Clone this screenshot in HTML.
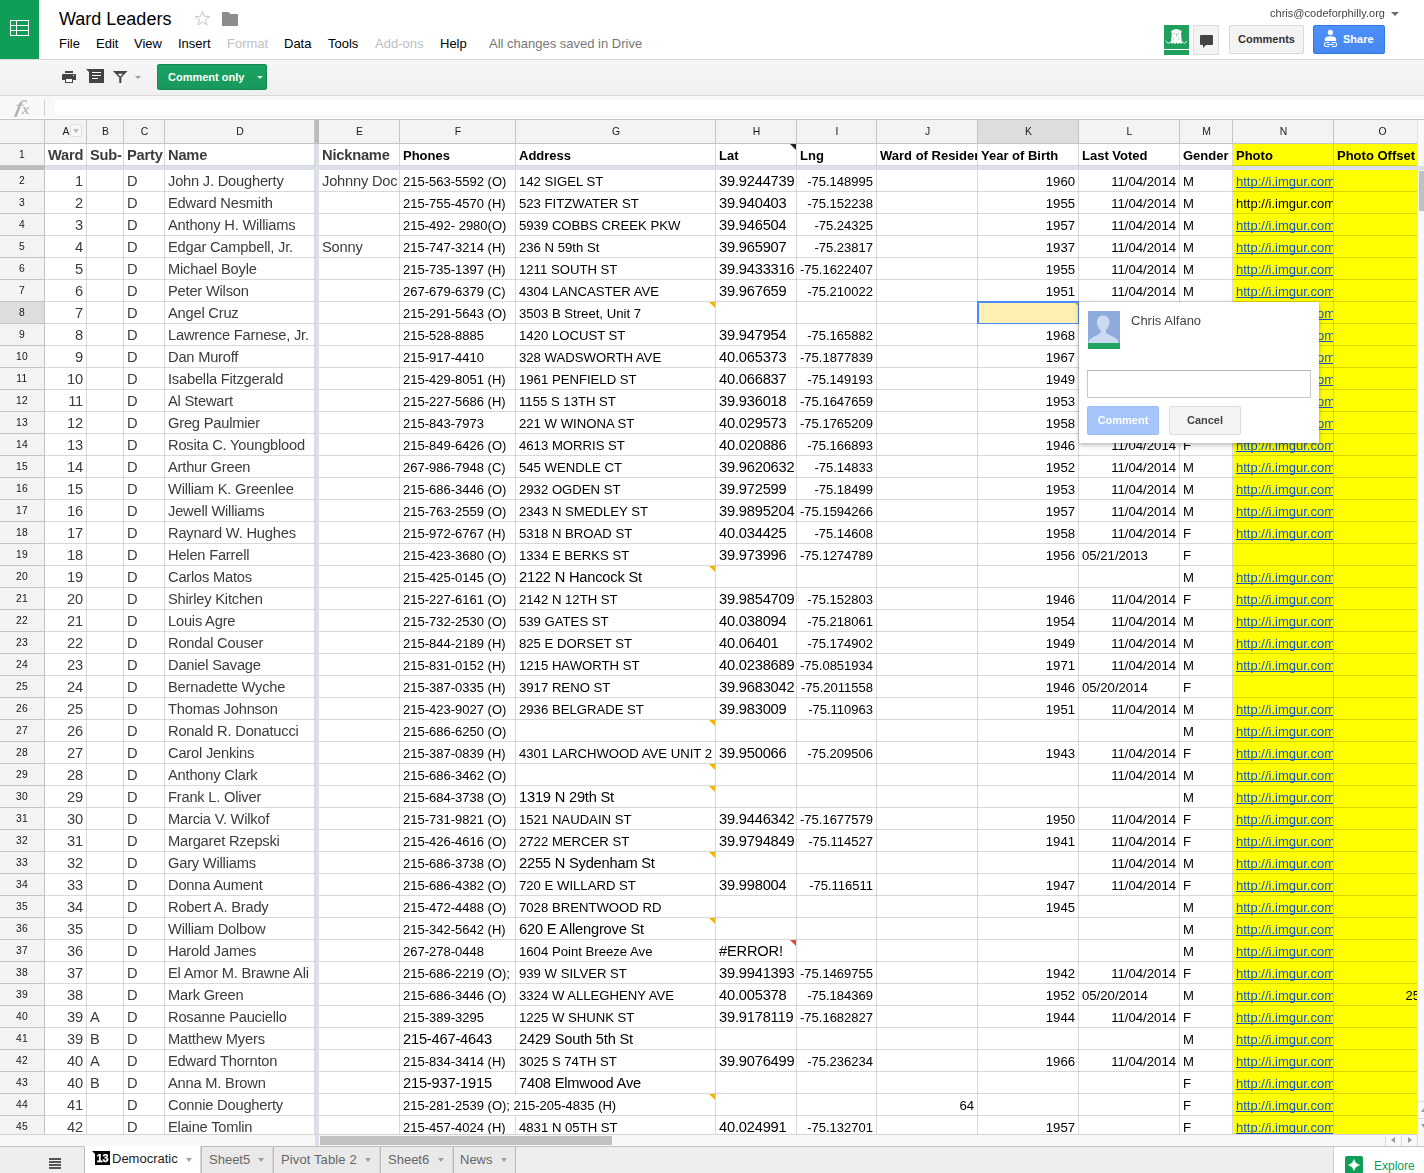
<!DOCTYPE html>
<html><head><meta charset="utf-8"><title>Ward Leaders - Google Sheets</title>
<style>
*{box-sizing:border-box;margin:0;padding:0}
html,body{width:1424px;height:1173px;overflow:hidden;background:#fff}
body{font-family:"Liberation Sans",Arial,sans-serif;font-size:13px;color:#000;position:relative}
div,span,a,svg{position:absolute}
span.i,.c span{position:static}
/* title bar */
#logo{left:0;top:0;width:39px;height:59px;background:#0f9d58}
#tb-line{left:0;top:59px;width:1424px;height:1px;background:#d9d9d9}

#title{left:59px;top:9px;font-size:18px;line-height:21px;white-space:nowrap;color:#000}
.m{top:36px;font-size:13px;line-height:16px;white-space:nowrap;color:#000}
.m.d{color:#c0c0c0}
.m.s{color:#777}
#email{left:1270px;top:6px;font-size:11px;line-height:14px;color:#444;white-space:nowrap;letter-spacing:0.03px}
.btn{top:25px;height:29px;border:1px solid #d9d9d9;border-radius:2px;background:#f3f3f3;font-size:11px;font-weight:bold;line-height:27px;text-align:center;color:#333;white-space:nowrap}
/* toolbar */
#toolbar{left:0;top:60px;width:1424px;height:35px;background:linear-gradient(#f6f6f6,#f0f0f0)}
#toolbar-b{left:0;top:95px;width:1424px;height:1px;background:#d9d9d9}
#cbtn{left:157px;top:64px;width:110px;height:26px;border-radius:2px;background:linear-gradient(#1ba261,#17995a);border:1px solid #14894f;color:#fff;font-weight:bold;font-size:11px;line-height:24px;white-space:nowrap}
/* formula bar */
#fbar{left:0;top:96px;width:1424px;height:23px;background:#f8f8f8;border-bottom:1px solid #fdfdfd}
#finput{left:55px;top:100px;width:1369px;height:15px;background:#fff}
#fsep{left:44px;top:99px;width:1px;height:17px;background:#d0d0d0}
#fx{left:0;top:96px;width:44px;height:23px;font-family:"Liberation Serif",serif;font-style:italic;color:#b2b2b2}
#fx span{position:absolute;line-height:20px}
.fxf{left:15px;top:1px;font-size:18px;transform:skewX(-6deg) scaleX(1.6);transform-origin:0 50%;-webkit-text-stroke:.2px #b2b2b2}
.fxx{left:22.300px;top:3px;font-size:15px;transform:scaleX(1.1);transform-origin:0 0;-webkit-text-stroke:.2px #b2b2b2}
.ga{will-change:transform}
/* grid */
#grid{left:0;top:0;width:1417px;height:1134px;overflow:hidden}
.yel{background:#ffff00}
.hl{left:45px;width:1372px;height:1px;background:rgba(0,0,0,.15)}
.vl{width:1px;background:rgba(0,0,0,.15)}
.c{height:21px;overflow:hidden;white-space:nowrap;padding:0 0 0 3px;line-height:21px}
.c.ov{overflow:visible}
.s10{font-size:13.15px;color:#000;padding-top:1px}
.s10.n{font-size:13px}
.s11{font-size:14.667px;letter-spacing:-.2px;color:#000;padding-top:1px}
.g11{font-size:14.667px;letter-spacing:-.2px;color:#3c3c3c;padding-top:1px}
.b{font-weight:bold}
.b.s10{font-size:13px}
.r{text-align:right;padding-right:3px}
.r.po{padding-right:10px}
.lk{color:#1155cc;text-decoration:underline;text-decoration-skip-ink:none;text-underline-offset:1px}
.nt{width:0;height:0;border-left:6px solid transparent;border-top:6px solid #f4b400}
.nt.blk{border-top-color:#222}
.nt.red{border-top-color:#dd4b39}
.fz{background:#dadfe8}
.fzh{background:#bcbcbc}
#sel{left:977px;top:301px;width:102px;height:23px;background:#fef0b3;overflow:hidden}
#sel i{position:absolute;left:0;top:0;right:0;bottom:0;border:2px solid #4a8af4;border-right-width:1.5px;border-bottom-width:1.5px}
/* headers */
#colhdr{left:0;top:119px;width:1417px;overflow:hidden;height:25px;background:#f3f3f3;border-top:1px solid #c4c4c4;border-bottom:1px solid #c4c4c4}
.ch{top:0;height:23px;border-right:1px solid #c4c4c4;text-align:center;font-size:10.4px;line-height:24px;color:#1a1a1a;text-indent:1px;box-sizing:content-box}
.ch.on{background:#dddddd}
#rowhdr{left:0;top:144px;width:45px;height:990px;background:#f3f3f3;border-right:1px solid #c4c4c4;overflow:hidden}
.rh{left:0;width:44px;height:22px;border-bottom:1px solid #c4c4c4;text-align:center;font-size:10.3px;line-height:22px;color:#161616;letter-spacing:.3px}
.rh.on{background:#dddddd}
#corner{left:0;top:119px;width:45px;height:25px;background:#f3f3f3;border:1px solid #c4c4c4;border-left:0}
.asort{left:70px;top:4px;width:12px;height:13px;border:1px solid #e0e0e0;border-radius:2px;background:#f8f8f8}
.asort:after{content:"";position:absolute;left:2px;top:4px;border-left:3.5px solid transparent;border-right:3.5px solid transparent;border-top:4px solid #bbb}
/* bottom */
#gridb{left:0;top:1134px;width:1417px;height:1px;background:#d4d4d4}
#hsb{left:0;top:1135px;width:1424px;height:11px;background:#f8f8f8}
.sbl{background:#dcdcdc}
.tri{width:0;height:0}
#hthumb{left:320px;top:1136px;width:292px;height:9px;background:#c1c1c1}
#vsb{left:1417px;top:119px;width:7px;height:1016px;background:#f8f8f8;border-top:1px solid #c4c4c4;border-left:1px solid #e2e2ea}
#vthumb{left:1419px;top:171px;width:5px;height:40px;background:#c1c1c1}
#bbar{left:0;top:1146px;width:1424px;height:27px;background:#eeeeee;border-top:1px solid #c4c4c4}
.tab{top:1146px;height:27px;border:1px solid #bdbdbd;border-bottom:0;background:#e9e9e9;box-shadow:-1px 0 0 #d6d6d6;font-size:13px;line-height:16px;color:#666;white-space:nowrap}
.tab.act{background:#fff;color:#222;border-top-color:#fff;box-shadow:none}
.car{width:0;height:0;border-left:3.5px solid transparent;border-right:3.5px solid transparent;border-top:4px solid #a0a0a0}
/* popup */
#pop{left:1079px;top:302px;width:240px;height:141px;background:#fff;box-shadow:0 2px 5px rgba(0,0,0,.28),0 0 1px rgba(0,0,0,.15)}
</style></head><body>
<div id="logo"><svg width="19" height="16" style="left:10px;top:20px" shape-rendering="crispEdges"><rect x="0.5" y="0.5" width="18" height="15" fill="none" stroke="#fff"/><rect x="6" y="0" width="1" height="16" fill="#fff"/><rect x="0" y="5" width="19" height="1" fill="#fff"/><rect x="0" y="10" width="19" height="1" fill="#fff"/></svg></div>
<div id="tb-line"></div>
<div id="title">Ward Leaders</div>
<svg id="star" width="17" height="17" viewBox="0 0 17 17" style="left:194px;top:10px"><path d="M8.5 1.3 L10.4 6.3 L15.7 6.5 L11.5 9.8 L13 15 L8.5 12 L4 15 L5.5 9.8 L1.3 6.5 L6.6 6.3 Z" fill="none" stroke="#c8c8c8" stroke-width="1"/></svg>
<svg id="folder" width="16" height="14" style="left:222px;top:12px"><path d="M0 0.5 Q0 0 .5 0 H6.5 L8.5 2 H15.5 Q16 2 16 2.5 V13.5 Q16 14 15.5 14 H.5 Q0 14 0 13.5 Z" fill="#8c8c8c"/></svg>
<div class="m" style="left:59px">File</div>
<div class="m" style="left:96px">Edit</div>
<div class="m" style="left:134px">View</div>
<div class="m" style="left:178px">Insert</div>
<div class="m d" style="left:227px">Format</div>
<div class="m" style="left:284px">Data</div>
<div class="m" style="left:328px">Tools</div>
<div class="m d" style="left:375px">Add-ons</div>
<div class="m" style="left:440px">Help</div>
<div class="m s" style="left:489px">All changes saved in Drive</div>
<div id="email" class="ga">chris@codeforphilly.org</div>
<div class="car" style="left:1391px;top:12px;border-left-width:4px;border-right-width:4px;border-top-color:#6e6e6e"></div>
<div id="anon" style="left:1164px;top:25px;width:25px;height:24px;background:#1fa15d"><svg width="25" height="24" viewBox="0 0 25 24"><path d="M7.200 6.800 Q7 5.600 8.300 5.600 Q10 3.900 12.400 3.900 Q14.800 3.900 16.500 5.600 Q17.800 5.600 17.600 6.800 Q17.600 7.600 17 8 L17.700 16.600 L18.200 17.200 Q16.900 20 15.600 17.600 Q14 20.200 12.400 17.600 Q10.800 20.200 9.200 17.600 Q7.900 20 6.600 17.200 L7.100 16.600 L7.800 8 Q7.200 7.600 7.200 6.800 Z" fill="#fff"/><path d="M2.100 16.400 L4.300 18.400 L6.800 16.900 M18 16.900 L20.500 18.400 L22.700 16.400" stroke="#fff" stroke-width=".9" fill="none" stroke-linecap="round"/><circle cx="10.300" cy="8.500" r=".55" fill="#1fa15d" opacity=".8"/><circle cx="14.400" cy="8.500" r=".55" fill="#1fa15d" opacity=".8"/><path d="M11.700 9.100 h1.300 l-.65 1.300 z" fill="#1fa15d"/><path d="M11.800 10.600 h1.100 v1.100 h-1.100z" fill="#1fa15d" opacity=".45"/><path d="M9.400 12.400 Q10.600 13.500 9.400 14.900 M15.300 12.400 Q14.100 13.500 15.300 14.900" stroke="#1fa15d" stroke-width=".6" fill="none" opacity=".6"/></svg></div>
<div style="left:1164px;top:50px;width:25px;height:5px;background:#1fa15d"></div>
<div class="btn" style="left:1193px;width:26px;height:30px;background:#f3f3f3;border-color:#dcdcdc;border-radius:0"><svg width="14" height="13" style="left:6px;top:9px"><path d="M1 0 H12 Q13 0 13 1 V9 Q13 10 12 10 H6 L3 13 V10 H1 Q0 10 0 9 V1 Q0 0 1 0 Z" fill="#444"/></svg></div>
<div class="btn" style="left:1229px;width:75px">Comments</div>
<div class="btn" style="left:1313px;width:72px;background:linear-gradient(#4d90fe,#4787ed);border-color:#3079ed;color:#fff;text-align:left;padding-left:29px">Share<svg width="15" height="20" viewBox="0 0 15 20" style="left:9px;top:3.4px"><circle cx="7.400" cy="3.400" r="2.600" fill="#fff"/><path d="M1.800 12 V10.300 Q1.800 7.200 7.400 7.200 Q13.100 7.200 13.100 10.300 V12 Z" fill="#fff"/><path d="M6.300 13.500 H3.400 Q1.400 13.500 1.400 15.500 Q1.400 17.500 3.400 17.500 H6.300 M8.700 13.500 H11.600 Q13.600 13.500 13.600 15.500 Q13.600 17.500 11.600 17.500 H8.700 M4 15.500 H11" fill="none" stroke="#fff" stroke-width="1.050"/></svg></div>
<div id="toolbar"></div><div id="toolbar-b"></div>
<svg id="ic-print" width="14" height="12" style="left:62px;top:71px" shape-rendering="crispEdges"><rect x="3" y="0" width="8" height="2" fill="#444"/><path d="M1 3 H13 Q14 3 14 4 V9 H11 V7 H3 V9 H0 V4 Q0 3 1 3 Z" fill="#444" shape-rendering="auto"/><rect x="3.500" y="7.500" width="7" height="4" fill="#fff" stroke="#444"/><rect x="11" y="4" width="1" height="1" fill="#fff"/></svg>
<svg id="ic-note" width="18" height="14" style="left:86px;top:69px" shape-rendering="crispEdges"><path d="M0 0 H18 V14 H3 V3 Z" fill="#444" shape-rendering="auto"/><rect x="6" y="3" width="9" height="1" fill="#fff"/><rect x="6" y="6" width="9" height="1" fill="#fff"/><rect x="6" y="9" width="6" height="1" fill="#fff"/></svg>
<svg id="ic-filter" width="15" height="12" style="left:113px;top:71px"><path d="M0 0 H14.500 L8.300 6.500 V12 H6.300 V6.500 Z" fill="#444"/><path d="M4.800 2.800 H9.900 L7.300 5.400 Z" fill="#f3f3f3"/></svg>
<div class="car" style="left:135px;top:76px;border-left-width:3px;border-right-width:3px;border-top-width:3px;border-top-color:#999"></div>
<div id="cbtn"><span class="i" style="position:absolute;left:10px;top:0">Comment only</span><div class="car" style="left:99px;top:11px;border-left-width:3px;border-right-width:3px;border-top-width:3px;border-top-color:rgba(255,255,255,.8)"></div></div>
<div id="fbar"></div><div id="finput"></div><div id="fsep"></div><div id="fx" class="ga"><span class="fxf">f</span><span class="fxx">x</span></div>
<div id="grid" class="ga">
<div class="yel" style="left:1233px;top:144px;width:184px;height:990px"></div>
<div class="hl" style="top:165px"></div>
<div class="hl" style="top:191px"></div>
<div class="hl" style="top:213px"></div>
<div class="hl" style="top:235px"></div>
<div class="hl" style="top:257px"></div>
<div class="hl" style="top:279px"></div>
<div class="hl" style="top:301px"></div>
<div class="hl" style="top:323px"></div>
<div class="hl" style="top:345px"></div>
<div class="hl" style="top:367px"></div>
<div class="hl" style="top:389px"></div>
<div class="hl" style="top:411px"></div>
<div class="hl" style="top:433px"></div>
<div class="hl" style="top:455px"></div>
<div class="hl" style="top:477px"></div>
<div class="hl" style="top:499px"></div>
<div class="hl" style="top:521px"></div>
<div class="hl" style="top:543px"></div>
<div class="hl" style="top:565px"></div>
<div class="hl" style="top:587px"></div>
<div class="hl" style="top:609px"></div>
<div class="hl" style="top:631px"></div>
<div class="hl" style="top:653px"></div>
<div class="hl" style="top:675px"></div>
<div class="hl" style="top:697px"></div>
<div class="hl" style="top:719px"></div>
<div class="hl" style="top:741px"></div>
<div class="hl" style="top:763px"></div>
<div class="hl" style="top:785px"></div>
<div class="hl" style="top:807px"></div>
<div class="hl" style="top:829px"></div>
<div class="hl" style="top:851px"></div>
<div class="hl" style="top:873px"></div>
<div class="hl" style="top:895px"></div>
<div class="hl" style="top:917px"></div>
<div class="hl" style="top:939px"></div>
<div class="hl" style="top:961px"></div>
<div class="hl" style="top:983px"></div>
<div class="hl" style="top:1005px"></div>
<div class="hl" style="top:1027px"></div>
<div class="hl" style="top:1049px"></div>
<div class="hl" style="top:1071px"></div>
<div class="hl" style="top:1093px"></div>
<div class="hl" style="top:1115px"></div>
<div class="vl" style="left:86px;top:144px;height:990px"></div>
<div class="vl" style="left:123px;top:144px;height:990px"></div>
<div class="vl" style="left:164px;top:144px;height:990px"></div>
<div class="vl" style="left:314px;top:144px;height:990px"></div>
<div class="vl" style="left:399px;top:144px;height:990px"></div>
<div class="vl" style="left:515px;top:144px;height:950px"></div>
<div class="vl" style="left:515px;top:1116px;height:18px"></div>
<div class="vl" style="left:715px;top:144px;height:990px"></div>
<div class="vl" style="left:796px;top:144px;height:990px"></div>
<div class="vl" style="left:876px;top:144px;height:990px"></div>
<div class="vl" style="left:977px;top:144px;height:990px"></div>
<div class="vl" style="left:1078px;top:144px;height:990px"></div>
<div class="vl" style="left:1179px;top:144px;height:990px"></div>
<div class="vl" style="left:1232px;top:144px;height:990px"></div>
<div class="vl" style="left:1333px;top:144px;height:990px"></div>
<div class="c b g11" style="left:45px;top:144px;width:41px">Ward</div>
<div class="c b g11" style="left:87px;top:144px;width:36px">Sub-</div>
<div class="c b g11" style="left:124px;top:144px;width:40px">Party</div>
<div class="c b g11" style="left:165px;top:144px;width:150px">Name</div>
<div class="c b g11" style="left:319px;top:144px;width:80px">Nickname</div>
<div class="c b s10" style="left:400px;top:144px;width:115px">Phones</div>
<div class="c b s10" style="left:516px;top:144px;width:199px">Address</div>
<div class="c b s10" style="left:716px;top:144px;width:80px">Lat</div>
<div class="c b s10" style="left:797px;top:144px;width:79px">Lng</div>
<div class="c b s10" style="left:877px;top:144px;width:100px">Ward of Residence</div>
<div class="c b s10" style="left:978px;top:144px;width:100px">Year of Birth</div>
<div class="c b s10" style="left:1079px;top:144px;width:100px">Last Voted</div>
<div class="c b s10" style="left:1180px;top:144px;width:52px">Gender</div>
<div class="c b s10" style="left:1233px;top:144px;width:100px">Photo</div>
<div class="c b s10" style="left:1334px;top:144px;width:96px">Photo Offset</div>
<div class="c g11 r" style="left:45px;top:170px;width:41px">1</div>
<div class="c g11" style="left:124px;top:170px;width:40px">D</div>
<div class="c g11" style="left:165px;top:170px;width:150px">John J. Dougherty</div>
<div class="c g11" style="left:319px;top:170px;width:80px">Johnny Doc</div>
<div class="c s10 n" style="left:400px;top:170px;width:115px">215-563-5592 (O)</div>
<div class="c s10" style="left:516px;top:170px;width:199px">142 SIGEL ST</div>
<div class="c s11" style="left:716px;top:170px;width:80px">39.9244739</div>
<div class="c s10 n r" style="left:797px;top:170px;width:79px">-75.148995</div>
<div class="c s10 r" style="left:978px;top:170px;width:100px">1960</div>
<div class="c s10 r" style="left:1079px;top:170px;width:100px">11/04/2014</div>
<div class="c s10" style="left:1180px;top:170px;width:52px">M</div>
<div class="c s10 n" style="left:1233px;top:170px;width:100px"><span class="lk">http://i.imgur.com/</span></div>
<div class="c g11 r" style="left:45px;top:192px;width:41px">2</div>
<div class="c g11" style="left:124px;top:192px;width:40px">D</div>
<div class="c g11" style="left:165px;top:192px;width:150px">Edward Nesmith</div>
<div class="c s10 n" style="left:400px;top:192px;width:115px">215-755-4570 (H)</div>
<div class="c s10" style="left:516px;top:192px;width:199px">523 FITZWATER ST</div>
<div class="c s11" style="left:716px;top:192px;width:80px">39.940403</div>
<div class="c s10 n r" style="left:797px;top:192px;width:79px">-75.152238</div>
<div class="c s10 r" style="left:978px;top:192px;width:100px">1955</div>
<div class="c s10 r" style="left:1079px;top:192px;width:100px">11/04/2014</div>
<div class="c s10" style="left:1180px;top:192px;width:52px">M</div>
<div class="c s10 n" style="left:1233px;top:192px;width:100px">http://i.imgur.com/</div>
<div class="c g11 r" style="left:45px;top:214px;width:41px">3</div>
<div class="c g11" style="left:124px;top:214px;width:40px">D</div>
<div class="c g11" style="left:165px;top:214px;width:150px">Anthony H. Williams</div>
<div class="c s10 n" style="left:400px;top:214px;width:115px">215-492- 2980(O)</div>
<div class="c s10" style="left:516px;top:214px;width:199px">5939 COBBS CREEK PKW</div>
<div class="c s11" style="left:716px;top:214px;width:80px">39.946504</div>
<div class="c s10 n r" style="left:797px;top:214px;width:79px">-75.24325</div>
<div class="c s10 r" style="left:978px;top:214px;width:100px">1957</div>
<div class="c s10 r" style="left:1079px;top:214px;width:100px">11/04/2014</div>
<div class="c s10" style="left:1180px;top:214px;width:52px">M</div>
<div class="c s10 n" style="left:1233px;top:214px;width:100px"><span class="lk">http://i.imgur.com/</span></div>
<div class="c g11 r" style="left:45px;top:236px;width:41px">4</div>
<div class="c g11" style="left:124px;top:236px;width:40px">D</div>
<div class="c g11" style="left:165px;top:236px;width:150px">Edgar Campbell, Jr.</div>
<div class="c g11" style="left:319px;top:236px;width:80px">Sonny</div>
<div class="c s10 n" style="left:400px;top:236px;width:115px">215-747-3214 (H)</div>
<div class="c s10" style="left:516px;top:236px;width:199px">236 N 59th St</div>
<div class="c s11" style="left:716px;top:236px;width:80px">39.965907</div>
<div class="c s10 n r" style="left:797px;top:236px;width:79px">-75.23817</div>
<div class="c s10 r" style="left:978px;top:236px;width:100px">1937</div>
<div class="c s10 r" style="left:1079px;top:236px;width:100px">11/04/2014</div>
<div class="c s10" style="left:1180px;top:236px;width:52px">M</div>
<div class="c s10 n" style="left:1233px;top:236px;width:100px"><span class="lk">http://i.imgur.com/</span></div>
<div class="c g11 r" style="left:45px;top:258px;width:41px">5</div>
<div class="c g11" style="left:124px;top:258px;width:40px">D</div>
<div class="c g11" style="left:165px;top:258px;width:150px">Michael Boyle</div>
<div class="c s10 n" style="left:400px;top:258px;width:115px">215-735-1397 (H)</div>
<div class="c s10" style="left:516px;top:258px;width:199px">1211 SOUTH ST</div>
<div class="c s11" style="left:716px;top:258px;width:80px">39.9433316</div>
<div class="c s10 n r" style="left:797px;top:258px;width:79px">-75.1622407</div>
<div class="c s10 r" style="left:978px;top:258px;width:100px">1955</div>
<div class="c s10 r" style="left:1079px;top:258px;width:100px">11/04/2014</div>
<div class="c s10" style="left:1180px;top:258px;width:52px">M</div>
<div class="c s10 n" style="left:1233px;top:258px;width:100px"><span class="lk">http://i.imgur.com/</span></div>
<div class="c g11 r" style="left:45px;top:280px;width:41px">6</div>
<div class="c g11" style="left:124px;top:280px;width:40px">D</div>
<div class="c g11" style="left:165px;top:280px;width:150px">Peter Wilson</div>
<div class="c s10 n" style="left:400px;top:280px;width:115px">267-679-6379 (C)</div>
<div class="c s10" style="left:516px;top:280px;width:199px">4304 LANCASTER AVE</div>
<div class="c s11" style="left:716px;top:280px;width:80px">39.967659</div>
<div class="c s10 n r" style="left:797px;top:280px;width:79px">-75.210022</div>
<div class="c s10 r" style="left:978px;top:280px;width:100px">1951</div>
<div class="c s10 r" style="left:1079px;top:280px;width:100px">11/04/2014</div>
<div class="c s10" style="left:1180px;top:280px;width:52px">M</div>
<div class="c s10 n" style="left:1233px;top:280px;width:100px"><span class="lk">http://i.imgur.com/</span></div>
<div class="c g11 r" style="left:45px;top:302px;width:41px">7</div>
<div class="c g11" style="left:124px;top:302px;width:40px">D</div>
<div class="c g11" style="left:165px;top:302px;width:150px">Angel Cruz</div>
<div class="c s10 n" style="left:400px;top:302px;width:115px">215-291-5643 (O)</div>
<div class="c s10" style="left:516px;top:302px;width:199px">3503 B Street, Unit 7</div>
<div class="c s10" style="left:1180px;top:302px;width:52px">M</div>
<div class="c s10 n" style="left:1233px;top:302px;width:100px"><span class="lk">http://i.imgur.com/</span></div>
<div class="c g11 r" style="left:45px;top:324px;width:41px">8</div>
<div class="c g11" style="left:124px;top:324px;width:40px">D</div>
<div class="c g11" style="left:165px;top:324px;width:150px">Lawrence Farnese, Jr.</div>
<div class="c s10 n" style="left:400px;top:324px;width:115px">215-528-8885</div>
<div class="c s10" style="left:516px;top:324px;width:199px">1420 LOCUST ST</div>
<div class="c s11" style="left:716px;top:324px;width:80px">39.947954</div>
<div class="c s10 n r" style="left:797px;top:324px;width:79px">-75.165882</div>
<div class="c s10 r" style="left:978px;top:324px;width:100px">1968</div>
<div class="c s10 r" style="left:1079px;top:324px;width:100px">11/04/2014</div>
<div class="c s10" style="left:1180px;top:324px;width:52px">M</div>
<div class="c s10 n" style="left:1233px;top:324px;width:100px"><span class="lk">http://i.imgur.com/</span></div>
<div class="c g11 r" style="left:45px;top:346px;width:41px">9</div>
<div class="c g11" style="left:124px;top:346px;width:40px">D</div>
<div class="c g11" style="left:165px;top:346px;width:150px">Dan Muroff</div>
<div class="c s10 n" style="left:400px;top:346px;width:115px">215-917-4410</div>
<div class="c s10" style="left:516px;top:346px;width:199px">328 WADSWORTH AVE</div>
<div class="c s11" style="left:716px;top:346px;width:80px">40.065373</div>
<div class="c s10 n r" style="left:797px;top:346px;width:79px">-75.1877839</div>
<div class="c s10 r" style="left:978px;top:346px;width:100px">1967</div>
<div class="c s10 r" style="left:1079px;top:346px;width:100px">11/04/2014</div>
<div class="c s10" style="left:1180px;top:346px;width:52px">M</div>
<div class="c s10 n" style="left:1233px;top:346px;width:100px"><span class="lk">http://i.imgur.com/</span></div>
<div class="c g11 r" style="left:45px;top:368px;width:41px">10</div>
<div class="c g11" style="left:124px;top:368px;width:40px">D</div>
<div class="c g11" style="left:165px;top:368px;width:150px">Isabella Fitzgerald</div>
<div class="c s10 n" style="left:400px;top:368px;width:115px">215-429-8051 (H)</div>
<div class="c s10" style="left:516px;top:368px;width:199px">1961 PENFIELD ST</div>
<div class="c s11" style="left:716px;top:368px;width:80px">40.066837</div>
<div class="c s10 n r" style="left:797px;top:368px;width:79px">-75.149193</div>
<div class="c s10 r" style="left:978px;top:368px;width:100px">1949</div>
<div class="c s10 r" style="left:1079px;top:368px;width:100px">11/04/2014</div>
<div class="c s10" style="left:1180px;top:368px;width:52px">F</div>
<div class="c s10 n" style="left:1233px;top:368px;width:100px"><span class="lk">http://i.imgur.com/</span></div>
<div class="c g11 r" style="left:45px;top:390px;width:41px">11</div>
<div class="c g11" style="left:124px;top:390px;width:40px">D</div>
<div class="c g11" style="left:165px;top:390px;width:150px">Al Stewart</div>
<div class="c s10 n" style="left:400px;top:390px;width:115px">215-227-5686 (H)</div>
<div class="c s10" style="left:516px;top:390px;width:199px">1155 S 13TH ST</div>
<div class="c s11" style="left:716px;top:390px;width:80px">39.936018</div>
<div class="c s10 n r" style="left:797px;top:390px;width:79px">-75.1647659</div>
<div class="c s10 r" style="left:978px;top:390px;width:100px">1953</div>
<div class="c s10 r" style="left:1079px;top:390px;width:100px">11/04/2014</div>
<div class="c s10" style="left:1180px;top:390px;width:52px">M</div>
<div class="c s10 n" style="left:1233px;top:390px;width:100px"><span class="lk">http://i.imgur.com/</span></div>
<div class="c g11 r" style="left:45px;top:412px;width:41px">12</div>
<div class="c g11" style="left:124px;top:412px;width:40px">D</div>
<div class="c g11" style="left:165px;top:412px;width:150px">Greg Paulmier</div>
<div class="c s10 n" style="left:400px;top:412px;width:115px">215-843-7973</div>
<div class="c s10" style="left:516px;top:412px;width:199px">221 W WINONA ST</div>
<div class="c s11" style="left:716px;top:412px;width:80px">40.029573</div>
<div class="c s10 n r" style="left:797px;top:412px;width:79px">-75.1765209</div>
<div class="c s10 r" style="left:978px;top:412px;width:100px">1958</div>
<div class="c s10 r" style="left:1079px;top:412px;width:100px">11/04/2014</div>
<div class="c s10" style="left:1180px;top:412px;width:52px">M</div>
<div class="c s10 n" style="left:1233px;top:412px;width:100px"><span class="lk">http://i.imgur.com/</span></div>
<div class="c g11 r" style="left:45px;top:434px;width:41px">13</div>
<div class="c g11" style="left:124px;top:434px;width:40px">D</div>
<div class="c g11" style="left:165px;top:434px;width:150px">Rosita C. Youngblood</div>
<div class="c s10 n" style="left:400px;top:434px;width:115px">215-849-6426 (O)</div>
<div class="c s10" style="left:516px;top:434px;width:199px">4613 MORRIS ST</div>
<div class="c s11" style="left:716px;top:434px;width:80px">40.020886</div>
<div class="c s10 n r" style="left:797px;top:434px;width:79px">-75.166893</div>
<div class="c s10 r" style="left:978px;top:434px;width:100px">1946</div>
<div class="c s10 r" style="left:1079px;top:434px;width:100px">11/04/2014</div>
<div class="c s10" style="left:1180px;top:434px;width:52px">F</div>
<div class="c s10 n" style="left:1233px;top:434px;width:100px"><span class="lk">http://i.imgur.com/</span></div>
<div class="c g11 r" style="left:45px;top:456px;width:41px">14</div>
<div class="c g11" style="left:124px;top:456px;width:40px">D</div>
<div class="c g11" style="left:165px;top:456px;width:150px">Arthur Green</div>
<div class="c s10 n" style="left:400px;top:456px;width:115px">267-986-7948 (C)</div>
<div class="c s10" style="left:516px;top:456px;width:199px">545 WENDLE CT</div>
<div class="c s11" style="left:716px;top:456px;width:80px">39.9620632</div>
<div class="c s10 n r" style="left:797px;top:456px;width:79px">-75.14833</div>
<div class="c s10 r" style="left:978px;top:456px;width:100px">1952</div>
<div class="c s10 r" style="left:1079px;top:456px;width:100px">11/04/2014</div>
<div class="c s10" style="left:1180px;top:456px;width:52px">M</div>
<div class="c s10 n" style="left:1233px;top:456px;width:100px"><span class="lk">http://i.imgur.com/</span></div>
<div class="c g11 r" style="left:45px;top:478px;width:41px">15</div>
<div class="c g11" style="left:124px;top:478px;width:40px">D</div>
<div class="c g11" style="left:165px;top:478px;width:150px">William K. Greenlee</div>
<div class="c s10 n" style="left:400px;top:478px;width:115px">215-686-3446 (O)</div>
<div class="c s10" style="left:516px;top:478px;width:199px">2932 OGDEN ST</div>
<div class="c s11" style="left:716px;top:478px;width:80px">39.972599</div>
<div class="c s10 n r" style="left:797px;top:478px;width:79px">-75.18499</div>
<div class="c s10 r" style="left:978px;top:478px;width:100px">1953</div>
<div class="c s10 r" style="left:1079px;top:478px;width:100px">11/04/2014</div>
<div class="c s10" style="left:1180px;top:478px;width:52px">M</div>
<div class="c s10 n" style="left:1233px;top:478px;width:100px"><span class="lk">http://i.imgur.com/</span></div>
<div class="c g11 r" style="left:45px;top:500px;width:41px">16</div>
<div class="c g11" style="left:124px;top:500px;width:40px">D</div>
<div class="c g11" style="left:165px;top:500px;width:150px">Jewell Williams</div>
<div class="c s10 n" style="left:400px;top:500px;width:115px">215-763-2559 (O)</div>
<div class="c s10" style="left:516px;top:500px;width:199px">2343 N SMEDLEY ST</div>
<div class="c s11" style="left:716px;top:500px;width:80px">39.9895204</div>
<div class="c s10 n r" style="left:797px;top:500px;width:79px">-75.1594266</div>
<div class="c s10 r" style="left:978px;top:500px;width:100px">1957</div>
<div class="c s10 r" style="left:1079px;top:500px;width:100px">11/04/2014</div>
<div class="c s10" style="left:1180px;top:500px;width:52px">M</div>
<div class="c s10 n" style="left:1233px;top:500px;width:100px"><span class="lk">http://i.imgur.com/</span></div>
<div class="c g11 r" style="left:45px;top:522px;width:41px">17</div>
<div class="c g11" style="left:124px;top:522px;width:40px">D</div>
<div class="c g11" style="left:165px;top:522px;width:150px">Raynard W. Hughes</div>
<div class="c s10 n" style="left:400px;top:522px;width:115px">215-972-6767 (H)</div>
<div class="c s10" style="left:516px;top:522px;width:199px">5318 N BROAD ST</div>
<div class="c s11" style="left:716px;top:522px;width:80px">40.034425</div>
<div class="c s10 n r" style="left:797px;top:522px;width:79px">-75.14608</div>
<div class="c s10 r" style="left:978px;top:522px;width:100px">1958</div>
<div class="c s10 r" style="left:1079px;top:522px;width:100px">11/04/2014</div>
<div class="c s10" style="left:1180px;top:522px;width:52px">F</div>
<div class="c s10 n" style="left:1233px;top:522px;width:100px"><span class="lk">http://i.imgur.com/</span></div>
<div class="c g11 r" style="left:45px;top:544px;width:41px">18</div>
<div class="c g11" style="left:124px;top:544px;width:40px">D</div>
<div class="c g11" style="left:165px;top:544px;width:150px">Helen Farrell</div>
<div class="c s10 n" style="left:400px;top:544px;width:115px">215-423-3680 (O)</div>
<div class="c s10" style="left:516px;top:544px;width:199px">1334 E BERKS ST</div>
<div class="c s11" style="left:716px;top:544px;width:80px">39.973996</div>
<div class="c s10 n r" style="left:797px;top:544px;width:79px">-75.1274789</div>
<div class="c s10 r" style="left:978px;top:544px;width:100px">1956</div>
<div class="c s10" style="left:1079px;top:544px;width:100px">05/21/2013</div>
<div class="c s10" style="left:1180px;top:544px;width:52px">F</div>
<div class="c g11 r" style="left:45px;top:566px;width:41px">19</div>
<div class="c g11" style="left:124px;top:566px;width:40px">D</div>
<div class="c g11" style="left:165px;top:566px;width:150px">Carlos Matos</div>
<div class="c s10 n" style="left:400px;top:566px;width:115px">215-425-0145 (O)</div>
<div class="c s11" style="left:516px;top:566px;width:199px">2122 N Hancock St</div>
<div class="c s10" style="left:1180px;top:566px;width:52px">M</div>
<div class="c s10 n" style="left:1233px;top:566px;width:100px"><span class="lk">http://i.imgur.com/</span></div>
<div class="c g11 r" style="left:45px;top:588px;width:41px">20</div>
<div class="c g11" style="left:124px;top:588px;width:40px">D</div>
<div class="c g11" style="left:165px;top:588px;width:150px">Shirley Kitchen</div>
<div class="c s10 n" style="left:400px;top:588px;width:115px">215-227-6161 (O)</div>
<div class="c s10" style="left:516px;top:588px;width:199px">2142 N 12TH ST</div>
<div class="c s11" style="left:716px;top:588px;width:80px">39.9854709</div>
<div class="c s10 n r" style="left:797px;top:588px;width:79px">-75.152803</div>
<div class="c s10 r" style="left:978px;top:588px;width:100px">1946</div>
<div class="c s10 r" style="left:1079px;top:588px;width:100px">11/04/2014</div>
<div class="c s10" style="left:1180px;top:588px;width:52px">F</div>
<div class="c s10 n" style="left:1233px;top:588px;width:100px"><span class="lk">http://i.imgur.com/</span></div>
<div class="c g11 r" style="left:45px;top:610px;width:41px">21</div>
<div class="c g11" style="left:124px;top:610px;width:40px">D</div>
<div class="c g11" style="left:165px;top:610px;width:150px">Louis Agre</div>
<div class="c s10 n" style="left:400px;top:610px;width:115px">215-732-2530 (O)</div>
<div class="c s10" style="left:516px;top:610px;width:199px">539 GATES ST</div>
<div class="c s11" style="left:716px;top:610px;width:80px">40.038094</div>
<div class="c s10 n r" style="left:797px;top:610px;width:79px">-75.218061</div>
<div class="c s10 r" style="left:978px;top:610px;width:100px">1954</div>
<div class="c s10 r" style="left:1079px;top:610px;width:100px">11/04/2014</div>
<div class="c s10" style="left:1180px;top:610px;width:52px">M</div>
<div class="c s10 n" style="left:1233px;top:610px;width:100px"><span class="lk">http://i.imgur.com/</span></div>
<div class="c g11 r" style="left:45px;top:632px;width:41px">22</div>
<div class="c g11" style="left:124px;top:632px;width:40px">D</div>
<div class="c g11" style="left:165px;top:632px;width:150px">Rondal Couser</div>
<div class="c s10 n" style="left:400px;top:632px;width:115px">215-844-2189 (H)</div>
<div class="c s10" style="left:516px;top:632px;width:199px">825 E DORSET ST</div>
<div class="c s11" style="left:716px;top:632px;width:80px">40.06401</div>
<div class="c s10 n r" style="left:797px;top:632px;width:79px">-75.174902</div>
<div class="c s10 r" style="left:978px;top:632px;width:100px">1949</div>
<div class="c s10 r" style="left:1079px;top:632px;width:100px">11/04/2014</div>
<div class="c s10" style="left:1180px;top:632px;width:52px">M</div>
<div class="c s10 n" style="left:1233px;top:632px;width:100px"><span class="lk">http://i.imgur.com/</span></div>
<div class="c g11 r" style="left:45px;top:654px;width:41px">23</div>
<div class="c g11" style="left:124px;top:654px;width:40px">D</div>
<div class="c g11" style="left:165px;top:654px;width:150px">Daniel Savage</div>
<div class="c s10 n" style="left:400px;top:654px;width:115px">215-831-0152 (H)</div>
<div class="c s10" style="left:516px;top:654px;width:199px">1215 HAWORTH ST</div>
<div class="c s11" style="left:716px;top:654px;width:80px">40.0238689</div>
<div class="c s10 n r" style="left:797px;top:654px;width:79px">-75.0851934</div>
<div class="c s10 r" style="left:978px;top:654px;width:100px">1971</div>
<div class="c s10 r" style="left:1079px;top:654px;width:100px">11/04/2014</div>
<div class="c s10" style="left:1180px;top:654px;width:52px">M</div>
<div class="c s10 n" style="left:1233px;top:654px;width:100px"><span class="lk">http://i.imgur.com/</span></div>
<div class="c g11 r" style="left:45px;top:676px;width:41px">24</div>
<div class="c g11" style="left:124px;top:676px;width:40px">D</div>
<div class="c g11" style="left:165px;top:676px;width:150px">Bernadette Wyche</div>
<div class="c s10 n" style="left:400px;top:676px;width:115px">215-387-0335 (H)</div>
<div class="c s10" style="left:516px;top:676px;width:199px">3917 RENO ST</div>
<div class="c s11" style="left:716px;top:676px;width:80px">39.9683042</div>
<div class="c s10 n r" style="left:797px;top:676px;width:79px">-75.2011558</div>
<div class="c s10 r" style="left:978px;top:676px;width:100px">1946</div>
<div class="c s10" style="left:1079px;top:676px;width:100px">05/20/2014</div>
<div class="c s10" style="left:1180px;top:676px;width:52px">F</div>
<div class="c g11 r" style="left:45px;top:698px;width:41px">25</div>
<div class="c g11" style="left:124px;top:698px;width:40px">D</div>
<div class="c g11" style="left:165px;top:698px;width:150px">Thomas Johnson</div>
<div class="c s10 n" style="left:400px;top:698px;width:115px">215-423-9027 (O)</div>
<div class="c s10" style="left:516px;top:698px;width:199px">2936 BELGRADE ST</div>
<div class="c s11" style="left:716px;top:698px;width:80px">39.983009</div>
<div class="c s10 n r" style="left:797px;top:698px;width:79px">-75.110963</div>
<div class="c s10 r" style="left:978px;top:698px;width:100px">1951</div>
<div class="c s10 r" style="left:1079px;top:698px;width:100px">11/04/2014</div>
<div class="c s10" style="left:1180px;top:698px;width:52px">M</div>
<div class="c s10 n" style="left:1233px;top:698px;width:100px"><span class="lk">http://i.imgur.com/</span></div>
<div class="c g11 r" style="left:45px;top:720px;width:41px">26</div>
<div class="c g11" style="left:124px;top:720px;width:40px">D</div>
<div class="c g11" style="left:165px;top:720px;width:150px">Ronald R. Donatucci</div>
<div class="c s10 n" style="left:400px;top:720px;width:115px">215-686-6250 (O)</div>
<div class="c s10" style="left:1180px;top:720px;width:52px">M</div>
<div class="c s10 n" style="left:1233px;top:720px;width:100px"><span class="lk">http://i.imgur.com/</span></div>
<div class="c g11 r" style="left:45px;top:742px;width:41px">27</div>
<div class="c g11" style="left:124px;top:742px;width:40px">D</div>
<div class="c g11" style="left:165px;top:742px;width:150px">Carol Jenkins</div>
<div class="c s10 n" style="left:400px;top:742px;width:115px">215-387-0839 (H)</div>
<div class="c s10" style="left:516px;top:742px;width:199px">4301 LARCHWOOD AVE UNIT 2</div>
<div class="c s11" style="left:716px;top:742px;width:80px">39.950066</div>
<div class="c s10 n r" style="left:797px;top:742px;width:79px">-75.209506</div>
<div class="c s10 r" style="left:978px;top:742px;width:100px">1943</div>
<div class="c s10 r" style="left:1079px;top:742px;width:100px">11/04/2014</div>
<div class="c s10" style="left:1180px;top:742px;width:52px">F</div>
<div class="c s10 n" style="left:1233px;top:742px;width:100px"><span class="lk">http://i.imgur.com/</span></div>
<div class="c g11 r" style="left:45px;top:764px;width:41px">28</div>
<div class="c g11" style="left:124px;top:764px;width:40px">D</div>
<div class="c g11" style="left:165px;top:764px;width:150px">Anthony Clark</div>
<div class="c s10 n" style="left:400px;top:764px;width:115px">215-686-3462 (O)</div>
<div class="c s10 r" style="left:1079px;top:764px;width:100px">11/04/2014</div>
<div class="c s10" style="left:1180px;top:764px;width:52px">M</div>
<div class="c s10 n" style="left:1233px;top:764px;width:100px"><span class="lk">http://i.imgur.com/</span></div>
<div class="c g11 r" style="left:45px;top:786px;width:41px">29</div>
<div class="c g11" style="left:124px;top:786px;width:40px">D</div>
<div class="c g11" style="left:165px;top:786px;width:150px">Frank L. Oliver</div>
<div class="c s10 n" style="left:400px;top:786px;width:115px">215-684-3738 (O)</div>
<div class="c s11" style="left:516px;top:786px;width:199px">1319 N 29th St</div>
<div class="c s10" style="left:1180px;top:786px;width:52px">M</div>
<div class="c s10 n" style="left:1233px;top:786px;width:100px"><span class="lk">http://i.imgur.com/</span></div>
<div class="c g11 r" style="left:45px;top:808px;width:41px">30</div>
<div class="c g11" style="left:124px;top:808px;width:40px">D</div>
<div class="c g11" style="left:165px;top:808px;width:150px">Marcia V. Wilkof</div>
<div class="c s10 n" style="left:400px;top:808px;width:115px">215-731-9821 (O)</div>
<div class="c s10" style="left:516px;top:808px;width:199px">1521 NAUDAIN ST</div>
<div class="c s11" style="left:716px;top:808px;width:80px">39.9446342</div>
<div class="c s10 n r" style="left:797px;top:808px;width:79px">-75.1677579</div>
<div class="c s10 r" style="left:978px;top:808px;width:100px">1950</div>
<div class="c s10 r" style="left:1079px;top:808px;width:100px">11/04/2014</div>
<div class="c s10" style="left:1180px;top:808px;width:52px">F</div>
<div class="c s10 n" style="left:1233px;top:808px;width:100px"><span class="lk">http://i.imgur.com/</span></div>
<div class="c g11 r" style="left:45px;top:830px;width:41px">31</div>
<div class="c g11" style="left:124px;top:830px;width:40px">D</div>
<div class="c g11" style="left:165px;top:830px;width:150px">Margaret Rzepski</div>
<div class="c s10 n" style="left:400px;top:830px;width:115px">215-426-4616 (O)</div>
<div class="c s10" style="left:516px;top:830px;width:199px">2722 MERCER ST</div>
<div class="c s11" style="left:716px;top:830px;width:80px">39.9794849</div>
<div class="c s10 n r" style="left:797px;top:830px;width:79px">-75.114527</div>
<div class="c s10 r" style="left:978px;top:830px;width:100px">1941</div>
<div class="c s10 r" style="left:1079px;top:830px;width:100px">11/04/2014</div>
<div class="c s10" style="left:1180px;top:830px;width:52px">F</div>
<div class="c s10 n" style="left:1233px;top:830px;width:100px"><span class="lk">http://i.imgur.com/</span></div>
<div class="c g11 r" style="left:45px;top:852px;width:41px">32</div>
<div class="c g11" style="left:124px;top:852px;width:40px">D</div>
<div class="c g11" style="left:165px;top:852px;width:150px">Gary Williams</div>
<div class="c s10 n" style="left:400px;top:852px;width:115px">215-686-3738 (O)</div>
<div class="c s11" style="left:516px;top:852px;width:199px">2255 N Sydenham St</div>
<div class="c s10 r" style="left:1079px;top:852px;width:100px">11/04/2014</div>
<div class="c s10" style="left:1180px;top:852px;width:52px">M</div>
<div class="c s10 n" style="left:1233px;top:852px;width:100px"><span class="lk">http://i.imgur.com/</span></div>
<div class="c g11 r" style="left:45px;top:874px;width:41px">33</div>
<div class="c g11" style="left:124px;top:874px;width:40px">D</div>
<div class="c g11" style="left:165px;top:874px;width:150px">Donna Aument</div>
<div class="c s10 n" style="left:400px;top:874px;width:115px">215-686-4382 (O)</div>
<div class="c s10" style="left:516px;top:874px;width:199px">720 E WILLARD ST</div>
<div class="c s11" style="left:716px;top:874px;width:80px">39.998004</div>
<div class="c s10 n r" style="left:797px;top:874px;width:79px">-75.116511</div>
<div class="c s10 r" style="left:978px;top:874px;width:100px">1947</div>
<div class="c s10 r" style="left:1079px;top:874px;width:100px">11/04/2014</div>
<div class="c s10" style="left:1180px;top:874px;width:52px">F</div>
<div class="c s10 n" style="left:1233px;top:874px;width:100px"><span class="lk">http://i.imgur.com/</span></div>
<div class="c g11 r" style="left:45px;top:896px;width:41px">34</div>
<div class="c g11" style="left:124px;top:896px;width:40px">D</div>
<div class="c g11" style="left:165px;top:896px;width:150px">Robert A. Brady</div>
<div class="c s10 n" style="left:400px;top:896px;width:115px">215-472-4488 (O)</div>
<div class="c s10" style="left:516px;top:896px;width:199px">7028 BRENTWOOD RD</div>
<div class="c s10 r" style="left:978px;top:896px;width:100px">1945</div>
<div class="c s10" style="left:1180px;top:896px;width:52px">M</div>
<div class="c s10 n" style="left:1233px;top:896px;width:100px"><span class="lk">http://i.imgur.com/</span></div>
<div class="c g11 r" style="left:45px;top:918px;width:41px">35</div>
<div class="c g11" style="left:124px;top:918px;width:40px">D</div>
<div class="c g11" style="left:165px;top:918px;width:150px">William Dolbow</div>
<div class="c s10 n" style="left:400px;top:918px;width:115px">215-342-5642 (H)</div>
<div class="c s11" style="left:516px;top:918px;width:199px">620 E Allengrove St</div>
<div class="c s10" style="left:1180px;top:918px;width:52px">M</div>
<div class="c s10 n" style="left:1233px;top:918px;width:100px"><span class="lk">http://i.imgur.com/</span></div>
<div class="c g11 r" style="left:45px;top:940px;width:41px">36</div>
<div class="c g11" style="left:124px;top:940px;width:40px">D</div>
<div class="c g11" style="left:165px;top:940px;width:150px">Harold James</div>
<div class="c s10 n" style="left:400px;top:940px;width:115px">267-278-0448</div>
<div class="c s10" style="left:516px;top:940px;width:199px">1604 Point Breeze Ave</div>
<div class="c s11" style="left:716px;top:940px;width:80px">#ERROR!</div>
<div class="c s10" style="left:1180px;top:940px;width:52px">M</div>
<div class="c s10 n" style="left:1233px;top:940px;width:100px"><span class="lk">http://i.imgur.com/</span></div>
<div class="c g11 r" style="left:45px;top:962px;width:41px">37</div>
<div class="c g11" style="left:124px;top:962px;width:40px">D</div>
<div class="c g11" style="left:165px;top:962px;width:150px">El Amor M. Brawne Ali</div>
<div class="c s10 n" style="left:400px;top:962px;width:115px">215-686-2219 (O);</div>
<div class="c s10" style="left:516px;top:962px;width:199px">939 W SILVER ST</div>
<div class="c s11" style="left:716px;top:962px;width:80px">39.9941393</div>
<div class="c s10 n r" style="left:797px;top:962px;width:79px">-75.1469755</div>
<div class="c s10 r" style="left:978px;top:962px;width:100px">1942</div>
<div class="c s10 r" style="left:1079px;top:962px;width:100px">11/04/2014</div>
<div class="c s10" style="left:1180px;top:962px;width:52px">F</div>
<div class="c s10 n" style="left:1233px;top:962px;width:100px"><span class="lk">http://i.imgur.com/</span></div>
<div class="c g11 r" style="left:45px;top:984px;width:41px">38</div>
<div class="c g11" style="left:124px;top:984px;width:40px">D</div>
<div class="c g11" style="left:165px;top:984px;width:150px">Mark Green</div>
<div class="c s10 n" style="left:400px;top:984px;width:115px">215-686-3446 (O)</div>
<div class="c s10" style="left:516px;top:984px;width:199px">3324 W ALLEGHENY AVE</div>
<div class="c s11" style="left:716px;top:984px;width:80px">40.005378</div>
<div class="c s10 n r" style="left:797px;top:984px;width:79px">-75.184369</div>
<div class="c s10 r" style="left:978px;top:984px;width:100px">1952</div>
<div class="c s10" style="left:1079px;top:984px;width:100px">05/20/2014</div>
<div class="c s10" style="left:1180px;top:984px;width:52px">M</div>
<div class="c s10 n" style="left:1233px;top:984px;width:100px"><span class="lk">http://i.imgur.com/</span></div>
<div class="c s10 r po" style="left:1334px;top:984px;width:96px">25</div>
<div class="c g11 r" style="left:45px;top:1006px;width:41px">39</div>
<div class="c g11" style="left:87px;top:1006px;width:36px">A</div>
<div class="c g11" style="left:124px;top:1006px;width:40px">D</div>
<div class="c g11" style="left:165px;top:1006px;width:150px">Rosanne Pauciello</div>
<div class="c s10 n" style="left:400px;top:1006px;width:115px">215-389-3295</div>
<div class="c s10" style="left:516px;top:1006px;width:199px">1225 W SHUNK ST</div>
<div class="c s11" style="left:716px;top:1006px;width:80px">39.9178119</div>
<div class="c s10 n r" style="left:797px;top:1006px;width:79px">-75.1682827</div>
<div class="c s10 r" style="left:978px;top:1006px;width:100px">1944</div>
<div class="c s10 r" style="left:1079px;top:1006px;width:100px">11/04/2014</div>
<div class="c s10" style="left:1180px;top:1006px;width:52px">F</div>
<div class="c s10 n" style="left:1233px;top:1006px;width:100px"><span class="lk">http://i.imgur.com/</span></div>
<div class="c g11 r" style="left:45px;top:1028px;width:41px">39</div>
<div class="c g11" style="left:87px;top:1028px;width:36px">B</div>
<div class="c g11" style="left:124px;top:1028px;width:40px">D</div>
<div class="c g11" style="left:165px;top:1028px;width:150px">Matthew Myers</div>
<div class="c s11" style="left:400px;top:1028px;width:115px">215-467-4643</div>
<div class="c s11" style="left:516px;top:1028px;width:199px">2429 South 5th St</div>
<div class="c s10" style="left:1180px;top:1028px;width:52px">M</div>
<div class="c s10 n" style="left:1233px;top:1028px;width:100px"><span class="lk">http://i.imgur.com/</span></div>
<div class="c g11 r" style="left:45px;top:1050px;width:41px">40</div>
<div class="c g11" style="left:87px;top:1050px;width:36px">A</div>
<div class="c g11" style="left:124px;top:1050px;width:40px">D</div>
<div class="c g11" style="left:165px;top:1050px;width:150px">Edward Thornton</div>
<div class="c s10 n" style="left:400px;top:1050px;width:115px">215-834-3414 (H)</div>
<div class="c s10" style="left:516px;top:1050px;width:199px">3025 S 74TH ST</div>
<div class="c s11" style="left:716px;top:1050px;width:80px">39.9076499</div>
<div class="c s10 n r" style="left:797px;top:1050px;width:79px">-75.236234</div>
<div class="c s10 r" style="left:978px;top:1050px;width:100px">1966</div>
<div class="c s10 r" style="left:1079px;top:1050px;width:100px">11/04/2014</div>
<div class="c s10" style="left:1180px;top:1050px;width:52px">M</div>
<div class="c s10 n" style="left:1233px;top:1050px;width:100px"><span class="lk">http://i.imgur.com/</span></div>
<div class="c g11 r" style="left:45px;top:1072px;width:41px">40</div>
<div class="c g11" style="left:87px;top:1072px;width:36px">B</div>
<div class="c g11" style="left:124px;top:1072px;width:40px">D</div>
<div class="c g11" style="left:165px;top:1072px;width:150px">Anna M. Brown</div>
<div class="c s11" style="left:400px;top:1072px;width:115px">215-937-1915</div>
<div class="c s11" style="left:516px;top:1072px;width:199px">7408 Elmwood Ave</div>
<div class="c s10" style="left:1180px;top:1072px;width:52px">F</div>
<div class="c s10 n" style="left:1233px;top:1072px;width:100px"><span class="lk">http://i.imgur.com/</span></div>
<div class="c g11 r" style="left:45px;top:1094px;width:41px">41</div>
<div class="c g11" style="left:124px;top:1094px;width:40px">D</div>
<div class="c g11" style="left:165px;top:1094px;width:150px">Connie Dougherty</div>
<div class="c ov s10 n" style="left:400px;top:1094px;width:115px">215-281-2539 (O); 215-205-4835 (H)</div>
<div class="c s10 r" style="left:877px;top:1094px;width:100px">64</div>
<div class="c s10" style="left:1180px;top:1094px;width:52px">F</div>
<div class="c s10 n" style="left:1233px;top:1094px;width:100px"><span class="lk">http://i.imgur.com/</span></div>
<div class="c g11 r" style="left:45px;top:1116px;width:41px">42</div>
<div class="c g11" style="left:124px;top:1116px;width:40px">D</div>
<div class="c g11" style="left:165px;top:1116px;width:150px">Elaine Tomlin</div>
<div class="c s10 n" style="left:400px;top:1116px;width:115px">215-457-4024 (H)</div>
<div class="c s10" style="left:516px;top:1116px;width:199px">4831 N 05TH ST</div>
<div class="c s11" style="left:716px;top:1116px;width:80px">40.024991</div>
<div class="c s10 n r" style="left:797px;top:1116px;width:79px">-75.132701</div>
<div class="c s10 r" style="left:978px;top:1116px;width:100px">1957</div>
<div class="c s10" style="left:1180px;top:1116px;width:52px">F</div>
<div class="c s10 n" style="left:1233px;top:1116px;width:100px"><span class="lk">http://i.imgur.com/</span></div>
<div class="nt" style="left:709px;top:302px"></div>
<div class="nt" style="left:709px;top:566px"></div>
<div class="nt" style="left:709px;top:720px"></div>
<div class="nt" style="left:709px;top:764px"></div>
<div class="nt" style="left:709px;top:786px"></div>
<div class="nt" style="left:709px;top:852px"></div>
<div class="nt" style="left:709px;top:918px"></div>
<div class="nt" style="left:709px;top:1094px"></div>
<div class="nt blk" style="left:790px;top:144px"></div>
<div class="nt red" style="left:790px;top:940px"></div>
<div id="sel"><div class="nt" style="right:0;top:0;left:auto"></div><i></i></div>
<div class="fz" style="left:45px;top:166px;width:1372px;height:4px"></div>
<div class="fz" style="left:315px;top:144px;width:4px;height:990px"></div>
</div>
<div id="colhdr" class="ga">
<div class="ch" style="left:45px;width:41px">A</div>
<div class="ch" style="left:87px;width:36px">B</div>
<div class="ch" style="left:124px;width:40px">C</div>
<div class="ch" style="left:165px;width:149px">D</div>
<div class="ch" style="left:319px;width:80px">E</div>
<div class="ch" style="left:400px;width:115px">F</div>
<div class="ch" style="left:516px;width:199px">G</div>
<div class="ch" style="left:716px;width:80px">H</div>
<div class="ch" style="left:797px;width:79px">I</div>
<div class="ch" style="left:877px;width:100px">J</div>
<div class="ch on" style="left:978px;width:100px">K</div>
<div class="ch" style="left:1079px;width:100px">L</div>
<div class="ch" style="left:1180px;width:52px">M</div>
<div class="ch" style="left:1233px;width:100px">N</div>
<div class="ch" style="left:1334px;width:96px">O</div>
<div class="fzh" style="left:315px;top:0;width:4px;height:24px"></div>
<div class="asort"></div>
</div>
<div id="rowhdr" class="ga">
<div class="rh" style="top:0px">1</div>
<div class="rh" style="top:26px">2</div>
<div class="rh" style="top:48px">3</div>
<div class="rh" style="top:70px">4</div>
<div class="rh" style="top:92px">5</div>
<div class="rh" style="top:114px">6</div>
<div class="rh" style="top:136px">7</div>
<div class="rh on" style="top:158px">8</div>
<div class="rh" style="top:180px">9</div>
<div class="rh" style="top:202px">10</div>
<div class="rh" style="top:224px">11</div>
<div class="rh" style="top:246px">12</div>
<div class="rh" style="top:268px">13</div>
<div class="rh" style="top:290px">14</div>
<div class="rh" style="top:312px">15</div>
<div class="rh" style="top:334px">16</div>
<div class="rh" style="top:356px">17</div>
<div class="rh" style="top:378px">18</div>
<div class="rh" style="top:400px">19</div>
<div class="rh" style="top:422px">20</div>
<div class="rh" style="top:444px">21</div>
<div class="rh" style="top:466px">22</div>
<div class="rh" style="top:488px">23</div>
<div class="rh" style="top:510px">24</div>
<div class="rh" style="top:532px">25</div>
<div class="rh" style="top:554px">26</div>
<div class="rh" style="top:576px">27</div>
<div class="rh" style="top:598px">28</div>
<div class="rh" style="top:620px">29</div>
<div class="rh" style="top:642px">30</div>
<div class="rh" style="top:664px">31</div>
<div class="rh" style="top:686px">32</div>
<div class="rh" style="top:708px">33</div>
<div class="rh" style="top:730px">34</div>
<div class="rh" style="top:752px">35</div>
<div class="rh" style="top:774px">36</div>
<div class="rh" style="top:796px">37</div>
<div class="rh" style="top:818px">38</div>
<div class="rh" style="top:840px">39</div>
<div class="rh" style="top:862px">40</div>
<div class="rh" style="top:884px">41</div>
<div class="rh" style="top:906px">42</div>
<div class="rh" style="top:928px">43</div>
<div class="rh" style="top:950px">44</div>
<div class="rh" style="top:972px">45</div>
<div class="fzh" style="left:0;top:22px;width:44px;height:4px"></div>
</div><div id="corner"></div>
<div id="vsb"></div><div id="vthumb"></div>
<div id="gridb"></div>
<div id="hsb"></div><div id="hthumb"></div>
<div class="fz" style="left:315px;top:1135px;width:4px;height:11px"></div>
<div class="fz" style="left:1417px;top:166px;width:7px;height:4px"></div>
<div class="sbl" style="left:1385px;top:1135px;width:1px;height:11px"></div>
<div class="sbl" style="left:1401px;top:1135px;width:1px;height:11px"></div>
<div class="sbl" style="left:1417px;top:1135px;width:1px;height:11px"></div>
<div class="tri" style="left:1390.500px;top:1137px;border-top:3.5px solid transparent;border-bottom:3.5px solid transparent;border-right:4px solid #999"></div>
<div class="tri" style="left:1407.500px;top:1137px;border-top:3.5px solid transparent;border-bottom:3.5px solid transparent;border-left:4px solid #999"></div>
<div class="sbl" style="left:1418px;top:1101px;width:6px;height:1px"></div>
<div class="sbl" style="left:1418px;top:1118px;width:6px;height:1px"></div>
<div class="tri" style="left:1421px;top:1108px;border-left:3.5px solid transparent;border-right:3.5px solid transparent;border-bottom:4px solid #999"></div>
<div class="tri" style="left:1421px;top:1124px;border-left:3.5px solid transparent;border-right:3.5px solid transparent;border-top:4px solid #999"></div>
<div id="bbar"></div>
<svg width="13" height="12" style="left:49px;top:1158px" shape-rendering="crispEdges"><rect x="0" y="0" width="12" height="2" fill="#555"/><rect x="0" y="3" width="12" height="2" fill="#555"/><rect x="0" y="6" width="12" height="2" fill="#555"/><rect x="0" y="9" width="12" height="2" fill="#555"/></svg>
<div class="tab act" style="left:84px;width:118px"><div class="ga" style="left:10px;top:4px;width:15px;height:14px;background:#000;color:#fff;font-size:11px;font-weight:bold;line-height:14px;text-align:center;letter-spacing:-0.2px;-webkit-text-stroke:.25px #fff">13</div><div style="left:7px;top:4px;width:0;height:0;border-top:3px solid #000;border-left:3px solid transparent"></div><span style="left:27px;top:4px">Democratic</span><div class="car" style="left:101px;top:11px"></div></div>
<div class="tab" style="left:201px;width:73px"><span style="left:7px;top:5px">Sheet5</span><div class="car" style="left:56px;top:11px"></div></div>
<div class="tab" style="left:273px;width:108px"><span style="left:7px;top:5px;letter-spacing:.12px">Pivot Table 2</span><div class="car" style="left:91px;top:11px"></div></div>
<div class="tab" style="left:380px;width:74px"><span style="left:7px;top:5px">Sheet6</span><div class="car" style="left:57px;top:11px"></div></div>
<div class="tab" style="left:453px;width:63px"><span style="left:6px;top:5px">News</span><div class="car" style="left:47px;top:11px"></div></div>
<div id="explore" style="left:1333px;top:1147px;width:91px;height:26px;background:#fff;border-left:1px solid #d0d0d0"><div style="left:11px;top:9px;width:18px;height:18px;background:#0f9d58;border-radius:2px"><svg width="18" height="18" viewBox="0 0 18 18"><path d="M9 3.5 Q10 8 14.5 9 Q10 10 9 14.5 Q8 10 3.5 9 Q8 8 9 3.5 Z" fill="#fff" stroke="#fff" stroke-width=".6" stroke-linejoin="round"/></svg></div><span style="left:40px;top:12px;font-size:12px;line-height:14px;color:#0f9d58">Explore</span></div>
<div id="pop" class="ga">
<div style="left:9px;top:9px;width:32px;height:32px;background:#8eabdc;overflow:hidden"><svg width="32" height="32" viewBox="0 0 32 32"><path d="M15.2 4.4 C19 4.4 21.4 7 21.4 11 C21.4 14.5 20 17.5 17.9 19.3 L17.9 21.5 C19.5 23.5 24 25 27.5 27 C29.5 28.2 30.3 29.8 30.5 32 L0.5 32 C0.7 29.8 1.5 28.2 3.5 27 C7 25 11 23.5 12.6 21.5 L12.6 19.3 C10.4 17.500 9 14.5 9 11 C9 7 11.4 4.4 15.2 4.4 Z" fill="#cdd9f0"/></svg></div>
<div style="left:9px;top:41px;width:32px;height:6px;background:#1fa463"></div>
<div style="left:52px;top:11px;font-size:13px;line-height:16px;color:#444;white-space:nowrap">Chris Alfano</div>
<div style="left:8px;top:68px;width:224px;height:28px;border:1px solid #c8c8c8;border-top-color:#b8b8b8;background:#fff"></div>
<div class="btn" style="left:8px;top:104px;width:72px;height:29px;line-height:27px;background:#a6c6fb;border-color:#9abdf8;color:#fff;opacity:1">Comment</div>
<div class="btn" style="left:90px;top:104px;width:72px;height:29px;line-height:27px;background:#f3f3f3;border-color:#dcdcdc;color:#444">Cancel</div>
</div>
</body></html>
